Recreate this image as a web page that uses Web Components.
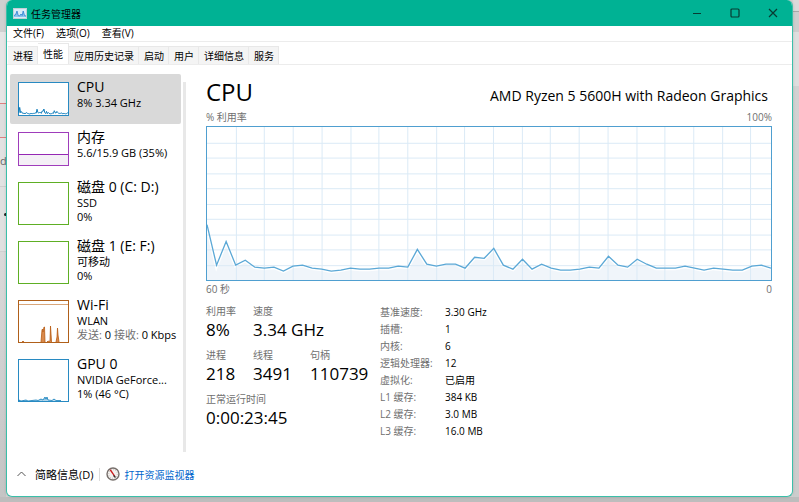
<!DOCTYPE html>
<html lang="zh-CN">
<head>
<meta charset="utf-8">
<title>任务管理器</title>
<style>
  html, body {
    height: 100%;
    margin: 0;
  }

  body {
    background: #d2d2d2;
    color: #000;
    font-family: "Open Sans", "Noto Sans CJK SC", sans-serif;
    font-size: 10px;
    overflow: hidden;
  }
</style>
</head>
<body>

<task-window heading="任务管理器">
  <menu-bar slot="menu">
    <button>文件(F)</button>
    <button>选项(O)</button>
    <button>查看(V)</button>
  </menu-bar>
  <tab-strip slot="tabs">
    <button>进程</button>
    <button aria-selected="true">性能</button>
    <button>应用历史记录</button>
    <button>启动</button>
    <button>用户</button>
    <button>详细信息</button>
    <button>服务</button>
  </tab-strip>

  <device-list slot="side">
    <device-item kind="cpu" selected>CPU<span slot="info">8% 3.34 GHz</span></device-item>
    <device-item kind="memory">内存<span slot="info">5.6/15.9 GB (35%)</span></device-item>
    <device-item kind="disk">磁盘 0 (C: D:)<span slot="info">SSD</span><span slot="info">0%</span></device-item>
    <device-item kind="disk">磁盘 1 (E: F:)<span slot="info">可移动</span><span slot="info">0%</span></device-item>
    <device-item kind="wifi">Wi-Fi<span slot="info">WLAN</span><net-rate slot="info" sent="0" received="0 Kbps"></net-rate></device-item>
    <device-item kind="gpu">GPU 0<span slot="info">NVIDIA GeForce...</span><span slot="info">1% (46 °C)</span></device-item>
  </device-list>

  <cpu-panel>
    <span slot="name">CPU</span>
    <span slot="model">AMD Ryzen 5 5600H with Radeon Graphics</span>
    <usage-chart slot="chart"></usage-chart>
    <stat-grid slot="stats">
      <stat-item label="利用率">8%</stat-item>
      <stat-item label="速度" wide>3.34 GHz</stat-item>
      <stat-item label="进程">218</stat-item>
      <stat-item label="线程">3491</stat-item>
      <stat-item label="句柄">110739</stat-item>
      <stat-item label="正常运行时间" full>0:00:23:45</stat-item>
    </stat-grid>
    <spec-table slot="specs"></spec-table>
  </cpu-panel>

  <status-bar slot="status"></status-bar>
</task-window>

<script>
const USAGE = [
  99, 140, 116, 140, 135, 142, 143, 142, 146, 141, 140, 143, 144, 146, 145,
  143, 144, 144, 143, 143, 141, 142, 124, 139, 141, 139, 139, 143, 132, 133,
  123, 140, 144, 134, 144, 139, 143, 145, 145, 144, 142, 143, 131, 140, 142,
  134, 139, 143, 143, 143, 141, 143, 145, 143, 144, 145, 145, 141, 140, 143
]

// spread the samples over a width x height box, the source scale is 0-155
const toPoints = (values, width, height) => values
  .map((y, i) => `${(i * width / (values.length - 1)).toFixed(1)},${(y * height / 155).toFixed(1)}`)
  .join(' ')

class TaskWindow extends HTMLElement {
  constructor () {
    super()
    this.shadow = this.attachShadow({ mode: 'open' })
  }

  connectedCallback () {
    this.shadow.innerHTML =
    /* html */`
    <style>
      :host {
        box-sizing: border-box;
        display: block;
        height: 100vh;
        padding: 0 6px 5px;
        position: relative;
      }

      .behind {
        inset: 0;
        overflow: hidden;
        position: absolute;
      }

      .behind .left, .behind .right {
        position: absolute;
        top: 0;
        width: 6px;
        height: 100%;
      }

      .behind .left {
        background: linear-gradient(#d0d0d0 32px, #e6e6e6 32px 103px, #dc8080 103px 104px, #dedede 104px 137px, #dc8080 137px 138px, #e2e2e2 138px 186px, #cfcfcf 186px 187px, #e0e0e0 187px 251px, #d0d0d0 251px 252px, #dadada 252px, #c4c4c4);
        color: #666;
        font-size: 11px;
        left: 0;
        line-height: 14px;
        overflow: hidden;
      }

      .behind .letter {
        padding-top: 154px;
      }

      .behind .dot {
        background: #222;
        border-radius: 50%;
        height: 3px;
        margin: 45px 0 0 4px;
        width: 3px;
      }

      .behind .right {
        background: linear-gradient(#dadada 11px, #a8a8a8 11px 12px, #cecece 12px 32px, #dedede 32px 86px, #d2d2d2 86px, #cccccc);
        right: 0;
      }

      .behind .bottom {
        background: #bdbdbd;
        bottom: 0;
        height: 5px;
        position: absolute;
        width: 100%;
      }

      .window {
        background: #fff;
        border: 1px solid #3abfa9;
        border-top: 0;
        border-radius: 6px;
        box-shadow: 0 0 3px rgba(0, 0, 0, .15);
        box-sizing: border-box;
        display: flex;
        flex-direction: column;
        height: 100%;
        overflow: hidden;
        position: relative;
      }

      header {
        align-items: center;
        background: #00b294;
        display: flex;
        flex: none;
        height: 26px;
        padding-left: 6px;
      }

      h1 {
        flex: 1;
        font-size: 10px;
        font-weight: 400;
        margin: 0 0 0 4px;
      }

      header button {
        background: none;
        border: 0;
        height: 26px;
        padding: 0;
        width: 38px;
      }

      header button svg {
        display: block;
        margin: auto;
      }

      main {
        display: flex;
        flex: 1;
        min-height: 0;
        padding: 9px 20px 0 3px;
      }

      .rule {
        background: #e8e8e8;
        flex: none;
        margin: 8px 20px 0 2px;
        width: 3px;
      }

      ::slotted(cpu-panel) {
        flex: 1;
        min-width: 0;
      }
    </style>

    <div class="behind" aria-hidden="true">
      <div class="left">
        <div class="letter">d</div>
        <div class="dot"></div>
      </div>
      <div class="right"></div>
      <div class="bottom"></div>
    </div>
    <div class="window">
      <header>
        <svg width="14" height="11" viewBox="0 0 14 11" aria-hidden="true">
          <rect x=".5" y=".5" width="13" height="10" fill="#d9ecf8" stroke="#c3cfd6"/>
          <path d="M1 9V7l1.500-.5L4 3l1.200 4.500 1.300.5L8 6l1.200 1.500L10.200 3l1.300 4.500 1.500.5v1H1z" fill="#8cc3ee"/>
          <path d="M1 7.500l1.500-.5L4 3l1.200 4.500 1.300.5L8 6l1.200 1.500L10.200 3l1.300 4.500 1.500.5" fill="none" stroke="#2a7fd0" stroke-width=".8"/>
        </svg>
        <h1>${this.getAttribute('heading')}</h1>
        <button aria-label="最小化"><svg width="10" height="10"><path d="M1 5.500h8" stroke="#083b32"/></svg></button>
        <button aria-label="最大化"><svg width="10" height="10"><rect x="1" y="1" width="8" height="8" rx="1" fill="none" stroke="#083b32" stroke-width="1.200"/></svg></button>
        <button aria-label="关闭"><svg width="10" height="10"><path d="M1 1l8 8M9 1l-8 8" stroke="#083b32" stroke-width="1.200"/></svg></button>
      </header>
      <slot name="menu"></slot>
      <slot name="tabs"></slot>
      <main>
        <slot name="side"></slot>
        <div class="rule"></div>
        <slot></slot>
      </main>
      <slot name="status"></slot>
    </div>
    `
  }
}

class MenuBar extends HTMLElement {
  constructor () {
    super()
    this.shadow = this.attachShadow({ mode: 'open' })
    this.shadow.innerHTML =
    /* html */`
    <style>
      :host {
        border-bottom: 1px solid #ececec;
        display: flex;
        flex: none;
        gap: 12px;
        height: 15px;
        padding-left: 6px;
      }

      ::slotted(button) {
        background: none;
        border: 0;
        color: inherit;
        font: inherit;
        line-height: 15px;
        padding: 0;
      }
    </style>
    <slot></slot>
    `
  }
}

class TabStrip extends HTMLElement {
  constructor () {
    super()
    this.shadow = this.attachShadow({ mode: 'open' })
    this.shadow.innerHTML =
    /* html */`
    <style>
      :host {
        align-items: flex-end;
        border-bottom: 1px solid #ececec;
        display: flex;
        flex: none;
        height: 22px;
        padding-left: 1px;
      }

      ::slotted(button) {
        background: #f4f4f4;
        border: 1px solid #e8e8e8;
        border-width: 1px 1px 0 0;
        color: inherit;
        font: inherit;
        height: 18px;
        line-height: 18px;
        padding: 0 4px 0 5px;
      }

      ::slotted(button[aria-selected]) {
        background: #fff;
        height: 21px;
        padding: 0 5px;
      }
    </style>
    <slot></slot>
    `
  }
}

class DeviceList extends HTMLElement {
  constructor () {
    super()
    this.shadow = this.attachShadow({ mode: 'open' })
    this.shadow.innerHTML =
    /* html */`
    <style>
      :host {
        display: flex;
        flex: none;
        flex-direction: column;
        width: 171px;
      }
    </style>
    <slot></slot>
    `
  }
}

class DeviceItem extends HTMLElement {
  constructor () {
    super()
    this.shadow = this.attachShadow({ mode: 'open' })
  }

  connectedCallback () {
    this.kind = this.getAttribute('kind')
    this.render()
  }

  thumb () {
    const height = this.kind === 'cpu' || this.kind === 'memory' ? 34 : 43
    const color = {
      cpu: '#117dbb',
      memory: '#9528b4',
      disk: '#4da60c',
      wifi: '#a74f01',
      gpu: '#117dbb'
    }[this.kind]
    const drawing = {
      cpu: `<polyline points="${toPoints(USAGE, 51, 34)}" fill="none" stroke="${color}"/>`,
      memory: `<path d="M1 22.500h49V33H1z" fill="#f4f0f6"/><path d="M1 22.500h49" stroke="${color}"/>`,
      disk: '',
      wifi: `
        <path d="M1 4.500h49" stroke="#d9a77b"/>
        <path d="M4 42l1-1 1 1M23 42l1-12 .500-1 .500 3 1-5 .500 0L27 42M29 42l1-1 1 .500L32 41l.500-15L33.500 42M38 42l1-5 .500-9 .500 7 1 7" fill="#d98a4d" stroke="#b85a12" stroke-width=".800"/>`,
      gpu: '<path d="M1 42v-1l2 1 5-1 2 1 8-1 2 .500 3-1.500 2 1 2-3 1 2 1-2 1 3 4 .500 2-1.500 2 1.500h5" fill="#8fc4e3" stroke="#117dbb" stroke-width=".800"/>'
    }[this.kind]

    return /* html */`
    <svg width="51" height="${height}" viewBox="0 0 51 ${height}" aria-hidden="true">
      <rect width="51" height="${height}" fill="#fff"/>
      ${drawing}
      <rect x=".5" y=".5" width="50" height="${height - 1}" fill="none" stroke="${color}" opacity=".9"/>
    </svg>`
  }

  render () {
    this.shadow.innerHTML =
    /* html */`
    <style>
      :host {
        border-radius: 2px;
        display: flex;
        gap: 8px;
        padding: 0 0 0 8px;
      }

      :host([selected]) {
        background: #d9d9d9;
      }

      svg {
        flex: none;
        margin: 8px 0;
      }

      .text {
        font-size: 14px;
        line-height: 19px;
        padding-top: 3px;
        white-space: nowrap;
      }

      ::slotted([slot=info]) {
        display: block;
        font-size: 11px;
        line-height: 14px;
      }
    </style>

    ${this.thumb()}
    <div class="text">
      <slot></slot>
      <slot name="info"></slot>
    </div>
    `
  }
}

class NetRate extends HTMLElement {
  constructor () {
    super()
    this.shadow = this.attachShadow({ mode: 'open' })
  }

  connectedCallback () {
    this.shadow.innerHTML =
    /* html */`
    <style>
      :host {
        display: block;
      }

      span {
        color: #707070;
      }
    </style>
    <span>发送:</span> ${this.getAttribute('sent')} <span>接收:</span> ${this.getAttribute('received')}
    `
  }
}

class CpuPanel extends HTMLElement {
  constructor () {
    super()
    this.shadow = this.attachShadow({ mode: 'open' })
    this.shadow.innerHTML =
    /* html */`
    <style>
      :host {
        display: block;
      }

      header {
        align-items: baseline;
        display: flex;
        justify-content: space-between;
        padding-right: 4px;
      }

      h2 {
        font-size: 24px;
        font-weight: 400;
        line-height: 35px;
        margin: 0;
      }

      .model {
        font-size: 14px;
      }

      .details {
        display: flex;
        gap: 10px;
        padding-top: 7px;
      }
    </style>

    <header>
      <h2><slot name="name"></slot></h2>
      <div class="model"><slot name="model"></slot></div>
    </header>
    <slot name="chart"></slot>
    <div class="details">
      <slot name="stats"></slot>
      <slot name="specs"></slot>
    </div>
    `
  }
}

class UsageChart extends HTMLElement {
  constructor () {
    super()
    this.shadow = this.attachShadow({ mode: 'open' })
  }

  connectedCallback () {
    const points = toPoints(USAGE, 566, 155)

    this.shadow.innerHTML =
    /* html */`
    <style>
      :host {
        color: #707070;
        display: block;
      }

      .caption {
        display: flex;
        justify-content: space-between;
        line-height: 16px;
      }

      svg {
        background: #fff;
        border: 1px solid #4f9fd0;
        box-sizing: border-box;
        display: block;
        height: 155px;
        margin-top: 1px;
        width: 100%;
      }

      .grid {
        stroke: #dbeaf6;
      }

      .grid, polyline {
        fill: none;
        vector-effect: non-scaling-stroke;
      }
    </style>

    <div class="caption"><span>% 利用率</span><span>100%</span></div>
    <svg viewBox="0 0 566 155" preserveAspectRatio="none" role="img" aria-label="CPU">
      <polygon points="0,155 ${points} 566,155" fill="#f0f5fa"/>
      <polyline points="${points}" stroke="#fff" stroke-width="4"/>
      ${this.gridLines()}
      <polyline points="${points}" stroke="#5ba8d6" stroke-width="1.300"/>
    </svg>
    <div class="caption"><span>60 秒</span><span>0</span></div>
    `
  }

  gridLines () {
    let d = ''
    for (let i = 1; i < 20; i++) d += `M${Math.round(i * 28.7) + 0.5} 0V155`
    for (let i = 1; i < 10; i++) d += `M0 ${Math.round(i * 15.5) + 0.5}H566`
    return `<path class="grid" d="${d}"/>`
  }
}

class StatGrid extends HTMLElement {
  constructor () {
    super()
    this.shadow = this.attachShadow({ mode: 'open' })
    this.shadow.innerHTML =
    /* html */`
    <style>
      :host {
        align-content: start;
        display: grid;
        grid-template-columns: 47px 57px 60px;
        row-gap: 6px;
      }

      ::slotted([wide]) {
        grid-column: span 2;
      }

      ::slotted([full]) {
        grid-column: 1 / -1;
      }
    </style>
    <slot></slot>
    `
  }
}

class StatItem extends HTMLElement {
  constructor () {
    super()
    this.shadow = this.attachShadow({ mode: 'open' })
  }

  connectedCallback () {
    this.shadow.innerHTML =
    /* html */`
    <style>
      :host {
        display: block;
        white-space: nowrap;
      }

      .label {
        color: #707070;
        line-height: 14px;
      }

      .value {
        font-size: 17px;
        line-height: 24px;
      }
    </style>
    <div class="label">${this.getAttribute('label')}</div>
    <div class="value"><slot></slot></div>
    `
  }
}

class SpecTable extends HTMLElement {
  constructor () {
    super()
    this.shadow = this.attachShadow({ mode: 'open' })
  }

  connectedCallback () {
    this.data = [
      ['基准速度', '3.30 GHz'],
      ['插槽', '1'],
      ['内核', '6'],
      ['逻辑处理器', '12'],
      ['虚拟化', '已启用'],
      ['L1 缓存', '384 KB'],
      ['L2 缓存', '3.0 MB'],
      ['L3 缓存', '16.0 MB']
    ]
    this.render()
  }

  render () {
    this.shadow.innerHTML =
    /* html */`
    <style>
      :host {
        display: block;
      }

      table {
        border-collapse: collapse;
        font: inherit;
        white-space: nowrap;
      }

      th, td {
        font-weight: 400;
        line-height: 17px;
        padding: 0;
        text-align: left;
      }

      th {
        color: #707070;
        width: 65px;
      }
    </style>
    <table>
      ${this.data.map(([name, value]) => `<tr><th scope="row">${name}:</th><td>${value}</td></tr>`).join('')}
    </table>
    `
  }
}

class StatusBar extends HTMLElement {
  constructor () {
    super()
    this.shadow = this.attachShadow({ mode: 'open' })
    this.shadow.innerHTML =
    /* html */`
    <style>
      :host {
        align-items: center;
        display: flex;
        flex: none;
        height: 44px;
        padding-left: 10px;
      }

      button {
        align-items: center;
        background: none;
        border: 0;
        color: inherit;
        display: flex;
        font: inherit;
        font-size: 11px;
        gap: 9px;
        padding: 0;
      }

      .rule {
        background: #dcdcdc;
        height: 13px;
        margin: 0 6px;
        width: 1px;
      }

      a {
        align-items: center;
        color: #0066cc;
        display: flex;
        gap: 4px;
        text-decoration: none;
      }
    </style>

    <button>
      <svg width="9" height="6" aria-hidden="true"><path d="M.5 5l4-4 4 4" fill="none" stroke="#555"/></svg>
      简略信息(D)
    </button>
    <div class="rule"></div>
    <a href="#resmon">
      <svg width="14" height="14" viewBox="0 0 14 14" aria-hidden="true">
        <circle cx="7" cy="7" r="6" fill="#f4f1ee" stroke="#77706c" stroke-width="1.400"/>
        <circle cx="7" cy="7" r="4.300" fill="none" stroke="#b9b2ae" stroke-width=".8" stroke-dasharray="1 1.200"/>
        <path d="M3.500 3l1.400-.6L9.500 9.300l-1 .8z" fill="#cc1b1b"/>
        <path d="M7.500 8.500l2 2" stroke="#333" stroke-width="1.200"/>
      </svg>
      打开资源监视器
    </a>
    `
  }
}

customElements.define('task-window', TaskWindow)
customElements.define('menu-bar', MenuBar)
customElements.define('tab-strip', TabStrip)
customElements.define('device-list', DeviceList)
customElements.define('device-item', DeviceItem)
customElements.define('net-rate', NetRate)
customElements.define('cpu-panel', CpuPanel)
customElements.define('usage-chart', UsageChart)
customElements.define('stat-grid', StatGrid)
customElements.define('stat-item', StatItem)
customElements.define('spec-table', SpecTable)
customElements.define('status-bar', StatusBar)
</script>
</body>
</html>
